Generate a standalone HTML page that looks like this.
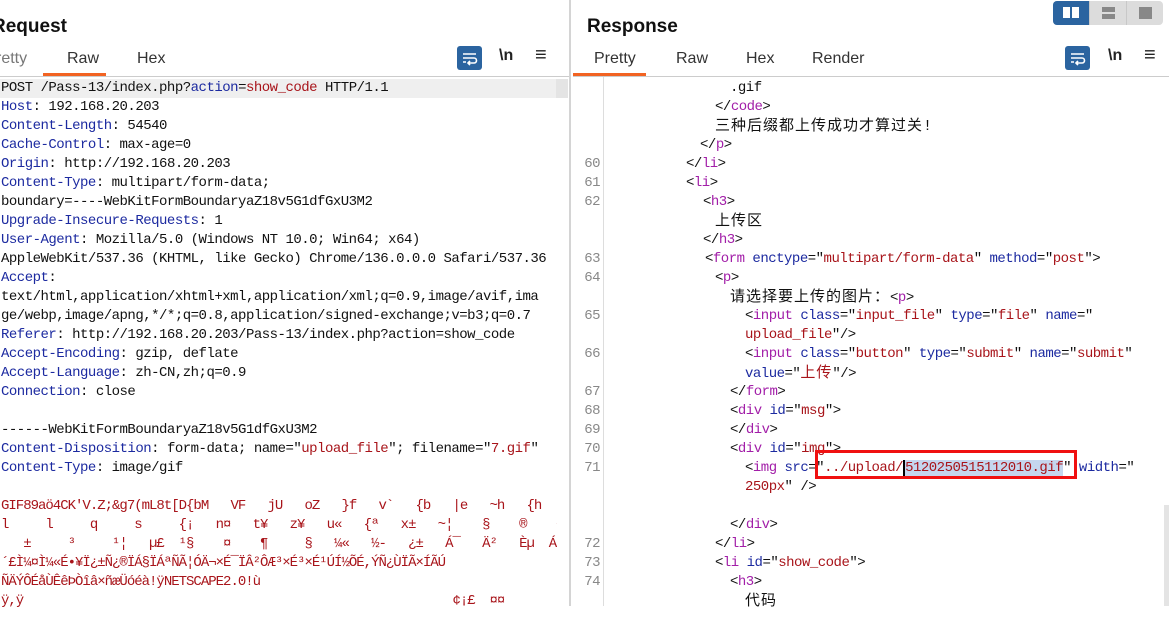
<!DOCTYPE html>
<html><head><meta charset="utf-8">
<style>
*{margin:0;padding:0;box-sizing:border-box}
body{width:1169px;height:606px;overflow:hidden;background:#fff;position:relative;font-family:"Liberation Sans","Noto Sans CJK SC",sans-serif}
.a{position:absolute;white-space:pre}
.m{font-family:"Liberation Mono","Noto Sans CJK SC",monospace;font-size:14px;letter-spacing:-0.5px;line-height:19px;color:#111}
.k{color:#1c2aa0}.r{color:#a8141a}.t{color:#a21ea8}.g{color:#999}
.c{letter-spacing:1px;font-size:15px}
.tab{font-size:16px;color:#333;top:50px}
.h{font-size:19px;font-weight:bold;color:#111;top:16px}
.wrap{width:25px;height:24px;background:#2b64a0;border-radius:3px;top:46px}
.n{font-size:16px;font-weight:bold;top:47px;color:#222}
.n2{font-size:20px;top:44px;color:#222}
.ln{position:absolute;width:28px;text-align:right;left:572px;color:#888}
</style></head><body>
<!-- Request panel -->
<div class="a h" style="left:-8px">Request</div>
<div class="a tab" style="left:-4px;color:#777">retty</div>
<div class="a tab" style="left:67px">Raw</div>
<div class="a tab" style="left:137px">Hex</div>
<div class="a" style="left:43px;top:73px;width:63px;height:3px;background:#f26322"></div>
<div class="a" style="left:0;top:76px;width:570px;height:1px;background:#ccc"></div>
<div class="a wrap" style="left:457px"><svg width="25" height="24"><path d="M6 8h13M6 12h11a2.5 2.5 0 0 1 0 5h-5M13 15l-2 2 2 2M6 16h3" stroke="#fff" stroke-width="1.6" fill="none"/></svg></div>
<div class="a n" style="left:499px">\n</div>
<div class="a n2" style="left:535px">≡</div>
<div class="a" style="left:0;top:79px;width:556px;height:19px;background:#efefef"></div>
<div class="a" style="left:556px;top:79px;width:12px;height:19px;background:#e4e4e4"></div>
<div class="a" style="left:569px;top:0;width:2px;height:606px;background:#d4d4d4"></div>
<div class="a m" style="left:1px;top:79px;width:556px;overflow:hidden">POST /Pass-13/index.php?<span class="k">action</span>=<span class="r">show_code</span> HTTP/1.1
<span class="k">Host</span>: 192.168.20.203
<span class="k">Content-Length</span>: 54540
<span class="k">Cache-Control</span>: max-age=0
<span class="k">Origin</span>: http://192.168.20.203
<span class="k">Content-Type</span>: multipart/form-data;
boundary=----WebKitFormBoundaryaZ18v5G1dfGxU3M2
<span class="k">Upgrade-Insecure-Requests</span>: 1
<span class="k">User-Agent</span>: Mozilla/5.0 (Windows NT 10.0; Win64; x64)
AppleWebKit/537.36 (KHTML, like Gecko) Chrome/136.0.0.0 Safari/537.36
<span class="k">Accept</span>:
text/html,application/xhtml+xml,application/xml;q=0.9,image/avif,ima
ge/webp,image/apng,*/*;q=0.8,application/signed-exchange;v=b3;q=0.7
<span class="k">Referer</span>: http://192.168.20.203/Pass-13/index.php?action=show_code
<span class="k">Accept-Encoding</span>: gzip, deflate
<span class="k">Accept-Language</span>: zh-CN,zh;q=0.9
<span class="k">Connection</span>: close

------WebKitFormBoundaryaZ18v5G1dfGxU3M2
<span class="k">Content-Disposition</span>: form-data; name="<span class="r">upload_file</span>"; filename="<span class="r">7.gif</span>"
<span class="k">Content-Type</span>: image/gif
<span class="r" style="letter-spacing:-1px">
GIF89aö4CK'V.Z;&amp;g7(mL8t[D{bM   VF   jU   oZ   }f   v`   {b   |e   ~h   {h
l     l     q     s     {¡   n¤   t¥   z¥   u«   {ª   x±   ~¦    §    ®    ¬
   ±     ³     ¹¦   µ£  ¹§    ¤    ¶     §   ¼«   ½-   ¿±   Á¯   Ä²   Èµ  Á
´£Ì¼¤Ì¼«É•¥Ï¿±Ñ¿®ÏÁ§ÏÁªÑÃ¦ÓÄ¬×É¯ÏÂ²ÔÆ³×É³×É¹ÚÍ½ÕÉ,ÝÑ¿ÙÏÃ×ÍÃÚ
ÑÄÝÔÉåÙÊêÞÒîâ×ñæÜóéà!ÿNETSCAPE2.0!ù
ÿ,ÿ                                                          ¢¡£  ¤¤</span></div>
<!-- Response panel -->
<div class="a h" style="left:587px">Response</div>
<div class="a tab" style="left:594px">Pretty</div>
<div class="a tab" style="left:676px">Raw</div>
<div class="a tab" style="left:746px">Hex</div>
<div class="a tab" style="left:812px">Render</div>
<div class="a" style="left:573px;top:73px;width:73px;height:3px;background:#f26322"></div>
<div class="a" style="left:573px;top:76px;width:596px;height:1px;background:#ccc"></div>
<div class="a wrap" style="left:1065px"><svg width="25" height="24"><path d="M6 8h13M6 12h11a2.5 2.5 0 0 1 0 5h-5M13 15l-2 2 2 2M6 16h3" stroke="#fff" stroke-width="1.6" fill="none"/></svg></div>
<div class="a n" style="left:1108px">\n</div>
<div class="a n2" style="left:1144px">≡</div>
<div class="a" style="left:1053px;top:1px;width:110px;height:24px;background:#dcdcdc;border-radius:4px;overflow:hidden">
 <div class="a" style="left:0;top:0;width:36px;height:24px;background:#2b64a0"></div>
 <div class="a" style="left:10px;top:6px;width:7px;height:11px;background:#fff"></div>
 <div class="a" style="left:19px;top:6px;width:7px;height:11px;background:#fff"></div>
 <div class="a" style="left:36px;top:0;width:1px;height:24px;background:#c8c8c8"></div>
 <div class="a" style="left:49px;top:6px;width:13px;height:5px;background:#888"></div>
 <div class="a" style="left:49px;top:13px;width:13px;height:5px;background:#888"></div>
 <div class="a" style="left:73px;top:0;width:1px;height:24px;background:#c8c8c8"></div>
 <div class="a" style="left:86px;top:6px;width:13px;height:12px;background:#888"></div>
</div>
<div class="a" style="left:603px;top:77px;width:1px;height:529px;background:#ddd"></div>
<div class="a" style="left:1164px;top:505px;width:5px;height:101px;background:#e4e4e4"></div>
<div class="a m" style="left:0;top:79px;width:1169px">
<div class="ln" style="top:76px">60</div><div class="ln" style="top:95px">61</div><div class="ln" style="top:114px">62</div><div class="ln" style="top:171px">63</div><div class="ln" style="top:190px">64</div><div class="ln" style="top:228px">65</div><div class="ln" style="top:266px">66</div><div class="ln" style="top:304px">67</div><div class="ln" style="top:323px">68</div><div class="ln" style="top:342px">69</div><div class="ln" style="top:361px">70</div><div class="ln" style="top:380px">71</div><div class="ln" style="top:456px">72</div><div class="ln" style="top:475px">73</div><div class="ln" style="top:494px">74</div>
<div class="a" style="left:730px;top:0">.gif</div>
<div class="a" style="left:715px;top:19px">&lt;/<span class="t">code</span>&gt;</div>
<div class="a c" style="left:715px;top:38px">三种后缀都上传成功才算过关!</div>
<div class="a" style="left:700px;top:57px">&lt;/<span class="t">p</span>&gt;</div>
<div class="a" style="left:686px;top:76px">&lt;/<span class="t">li</span>&gt;</div>
<div class="a" style="left:686px;top:95px">&lt;<span class="t">li</span>&gt;</div>
<div class="a" style="left:703px;top:114px">&lt;<span class="t">h3</span>&gt;</div>
<div class="a c" style="left:715px;top:133px">上传区</div>
<div class="a" style="left:703px;top:152px">&lt;/<span class="t">h3</span>&gt;</div>
<div class="a" style="left:705px;top:171px">&lt;<span class="t">form</span> <span class="k">enctype</span>="<span class="r">multipart/form-data</span>" <span class="k">method</span>="<span class="r">post</span>"&gt;</div>
<div class="a" style="left:715px;top:190px">&lt;<span class="t">p</span>&gt;</div>
<div class="a" style="left:730px;top:209px"><span class="c">请选择要上传的图片：</span>&lt;<span class="t">p</span>&gt;</div>
<div class="a" style="left:745px;top:228px">&lt;<span class="t">input</span> <span class="k">class</span>="<span class="r">input_file</span>" <span class="k">type</span>="<span class="r">file</span>" <span class="k">name</span>="</div>
<div class="a" style="left:745px;top:247px"><span class="r">upload_file</span>"/&gt;</div>
<div class="a" style="left:745px;top:266px">&lt;<span class="t">input</span> <span class="k">class</span>="<span class="r">button</span>" <span class="k">type</span>="<span class="r">submit</span>" <span class="k">name</span>="<span class="r">submit</span>"</div>
<div class="a" style="left:745px;top:285px"><span class="k">value</span>="<span class="r c">上传</span>"/&gt;</div>
<div class="a" style="left:730px;top:304px">&lt;/<span class="t">form</span>&gt;</div>
<div class="a" style="left:730px;top:323px">&lt;<span class="t">div</span> <span class="k">id</span>="<span class="r">msg</span>"&gt;</div>
<div class="a" style="left:730px;top:342px">&lt;/<span class="t">div</span>&gt;</div>
<div class="a" style="left:730px;top:361px">&lt;<span class="t">div</span> <span class="k">id</span>="<span class="r">img</span>"&gt;</div>
<div class="a" style="left:745px;top:380px">&lt;<span class="t">img</span> <span class="k">src</span>="<span class="r">../upload/<span style="background:#c5d6ee;border-left:2px solid #000">5120250515112010.gif</span></span>" <span class="k">width</span>="</div>
<div class="a" style="left:745px;top:399px"><span class="r">250px</span>" /&gt;</div>
<div class="a" style="left:730px;top:437px">&lt;/<span class="t">div</span>&gt;</div>
<div class="a" style="left:715px;top:456px">&lt;/<span class="t">li</span>&gt;</div>
<div class="a" style="left:715px;top:475px">&lt;<span class="t">li</span> <span class="k">id</span>="<span class="r">show_code</span>"&gt;</div>
<div class="a" style="left:730px;top:494px">&lt;<span class="t">h3</span>&gt;</div>
<div class="a c" style="left:745px;top:513px">代码</div>
</div>
<div class="a" style="left:815px;top:450px;width:262px;height:29px;border:3px solid #f01010"></div>
</body></html>
